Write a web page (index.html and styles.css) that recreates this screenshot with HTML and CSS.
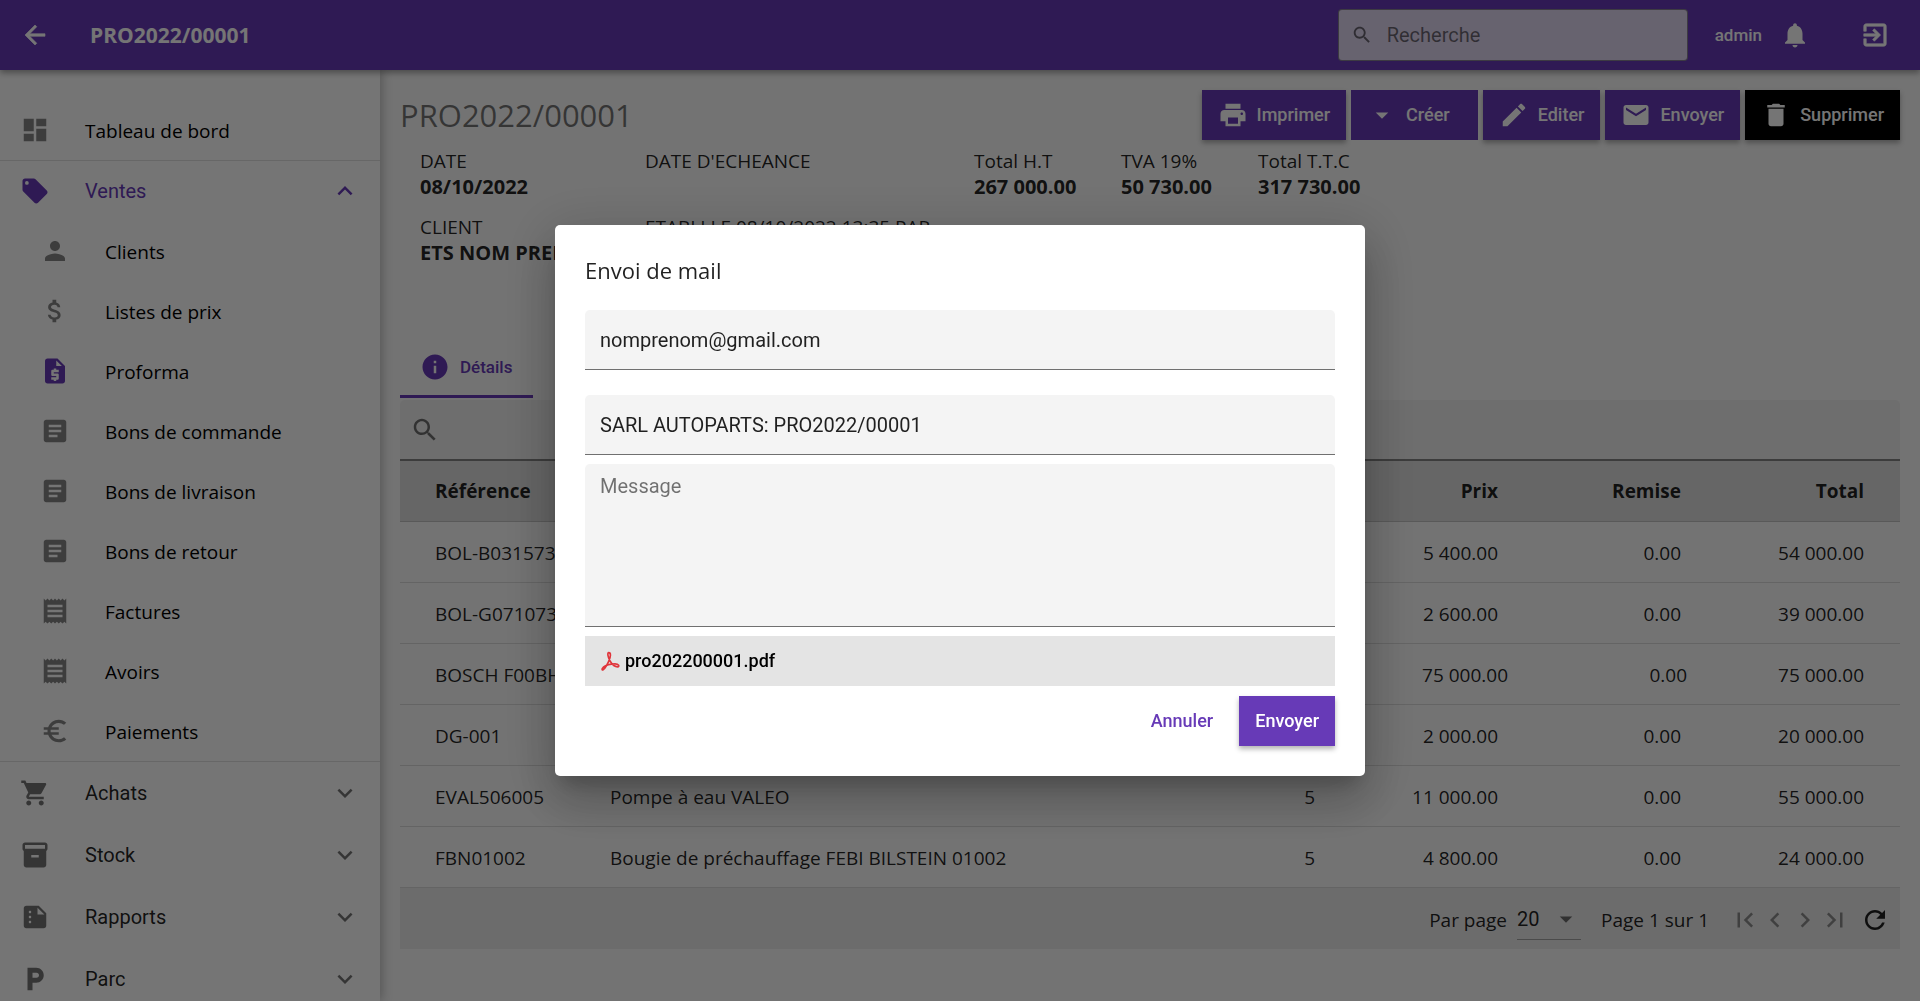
FILE: index.html
```html
<!DOCTYPE html>
<html lang="fr">
<head>
<meta charset="utf-8">
<meta name="viewport" content="width=device-width, initial-scale=1">
<title>PRO2022/00001</title>
<link rel="stylesheet" href="styles.css">
</head>
<body>
<svg class="sprite" aria-hidden="true">
  <symbol id="back" viewBox="0 0 24 24"><path stroke="currentColor" stroke-width=".5" d="M20 11H7.83l5.59-5.59L12 4l-8 8 8 8 1.41-1.41L7.83 13H20v-2z"/></symbol>
  <symbol id="search" viewBox="0 0 24 24"><path d="M15.5 14h-.79l-.28-.27C15.41 12.59 16 11.11 16 9.5 16 5.91 13.09 3 9.5 3S3 5.91 3 9.5 5.91 16 9.5 16c1.61 0 3.09-.59 4.23-1.57l.27.28v.79l5 4.99L20.49 19l-4.99-5zm-6 0C7.01 14 5 11.99 5 9.5S7.01 5 9.5 5 14 7.01 14 9.5 11.99 14 9.5 14z"/></symbol>
  <symbol id="bell" viewBox="0 0 24 24"><path d="M12 22c1.1 0 2-.9 2-2h-4c0 1.1.89 2 2 2zm6-6v-5c0-3.07-1.64-5.64-4.5-6.32V4c0-.83-.67-1.5-1.5-1.5s-1.5.67-1.5 1.5v.68C7.63 5.36 6 7.92 6 11v5l-2 2v1h16v-1l-2-2z"/></symbol>
  <symbol id="exit" viewBox="0 0 24 24"><path stroke="currentColor" stroke-width=".5" d="M10.09 15.59L11.5 17l5-5-5-5-1.41 1.41L12.67 11H3v2h9.67l-2.58 2.59zM19 3H5c-1.11 0-2 .9-2 2v4h2V5h14v14H5v-4H3v4c0 1.1.89 2 2 2h14c1.1 0 2-.9 2-2V5c0-1.1-.9-2-2-2z"/></symbol>
  <symbol id="dashboard" viewBox="0 0 24 24"><path d="M3 13h8V3H3v10zm0 8h8v-6H3v6zm10 0h8V11h-8v10zm0-18v6h8V3h-8z"/></symbol>
  <symbol id="tag" viewBox="0 0 24 24"><path d="M5.5,7A1.5,1.5 0 0,1 4,5.5A1.5,1.5 0 0,1 5.5,4A1.5,1.5 0 0,1 7,5.5A1.5,1.5 0 0,1 5.5,7M21.41,11.58L12.41,2.58C12.05,2.22 11.55,2 11,2H4C2.89,2 2,2.89 2,4V11C2,11.55 2.22,12.05 2.59,12.41L11.58,21.41C11.95,21.77 12.45,22 13,22C13.55,22 14.05,21.77 14.41,21.41L21.41,14.41C21.78,14.05 22,13.55 22,13C22,12.44 21.77,11.94 21.41,11.58Z"/></symbol>
  <symbol id="up" viewBox="0 0 24 24"><path d="M12 8l-6 6 1.41 1.41L12 10.83l4.59 4.58L18 14z"/></symbol>
  <symbol id="down" viewBox="0 0 24 24"><path d="M16.59 8.59L12 13.17 7.41 8.59 6 10l6 6 6-6z"/></symbol>
  <symbol id="person" viewBox="0 0 24 24"><path d="M12 12c2.21 0 4-1.79 4-4s-1.79-4-4-4-4 1.79-4 4 1.79 4 4 4zm0 2c-2.67 0-8 1.34-8 4v2h16v-2c0-2.66-5.33-4-8-4z"/></symbol>
  <symbol id="dollar" viewBox="0 0 24 24"><path d="M11.8 10.9c-2.27-.59-3-1.2-3-2.15 0-1.09 1.01-1.85 2.7-1.85 1.78 0 2.44.85 2.5 2.1h2.21c-.07-1.72-1.12-3.3-3.21-3.81V3h-3v2.16c-1.94.42-3.5 1.68-3.5 3.61 0 2.31 1.91 3.46 4.7 4.13 2.5.6 3 1.48 3 2.41 0 .69-.49 1.79-2.7 1.79-2.06 0-2.87-.92-2.98-2.1h-2.2c.12 2.19 1.76 3.42 3.68 3.83V21h3v-2.15c1.95-.37 3.5-1.5 3.5-3.55 0-2.84-2.43-3.81-4.7-4.4z"/></symbol>
  <symbol id="quote" viewBox="0 0 24 24"><path d="M14 2H6c-1.1 0-1.99.9-1.99 2L4 20c0 1.1.89 2 1.99 2H18c1.1 0 2-.9 2-2V8l-6-6zm1 11h-4v1h3c.55 0 1 .45 1 1v3c0 .55-.45 1-1 1h-1v1h-2v-1H9v-2h4v-1h-3c-.55 0-1-.45-1-1v-3c0-.55.45-1 1-1h1v-1h2v1h2v2zm-2-5V3.5L17.5 8H13z"/></symbol>
  <symbol id="article" viewBox="0 0 24 24"><path d="M19 3H5c-1.1 0-2 .9-2 2v14c0 1.1.9 2 2 2h14c1.1 0 2-.9 2-2V5c0-1.1-.9-2-2-2zm-5 14H7v-2h7v2zm3-4H7v-2h10v2zm0-4H7V7h10v2z"/></symbol>
  <symbol id="receipt" viewBox="0 0 24 24"><path d="M18 17H6v-2h12v2zm0-4H6v-2h12v2zm0-4H6V7h12v2zM3 22l1.5-1.5L6 22l1.5-1.5L9 22l1.5-1.5L12 22l1.5-1.5L15 22l1.5-1.5L18 22l1.5-1.5L21 22V2l-1.5 1.5L18 2l-1.500 1.500L15 2l-1.500 1.500L12 2l-1.500 1.500L9 2 7.500 3.500 6 2 4.500 3.500 3 2v20z"/></symbol>
  <symbol id="euro" viewBox="0 0 24 24"><path d="M15 18.500c-2.510 0-4.680-1.420-5.760-3.500H15v-2H8.580c-.05-.33-.08-.66-.08-1s.03-.67.08-1H15V9H9.240C10.320 6.920 12.500 5.500 15 5.500c1.610 0 3.090.59 4.230 1.570L21 5.300C19.410 3.870 17.300 3 15 3c-3.920 0-7.240 2.510-8.480 6H3v2h3.060c-.04.33-.06.66-.06 1s.02.67.06 1H3v2h3.520c1.240 3.490 4.560 6 8.480 6 2.310 0 4.410-.87 6-2.300l-1.780-1.770c-1.130.98-2.600 1.570-4.220 1.570z"/></symbol>
  <symbol id="cart" viewBox="0 0 24 24"><path d="M7 18c-1.1 0-1.99.9-1.99 2S5.9 22 7 22s2-.9 2-2-.9-2-2-2zM1 2v2h2l3.6 7.59-1.35 2.45c-.16.28-.25.61-.25.96 0 1.1.9 2 2 2h12v-2H7.42c-.14 0-.25-.11-.25-.25l.03-.12.9-1.63h7.45c.75 0 1.41-.41 1.75-1.03l3.58-6.49c.08-.14.12-.31.12-.48 0-.55-.45-1-1-1H5.21l-.94-2H1zm16 16c-1.1 0-1.99.9-1.99 2s.89 2 1.99 2 2-.9 2-2-.9-2-2-2z"/></symbol>
  <symbol id="box" viewBox="0 0 24 24"><path d="M20 2H4c-1 0-2 .9-2 2v3.01c0 .72.43 1.34 1 1.69V20c0 1.1 1.1 2 2 2h14c.9 0 2-.9 2-2V8.7c.57-.35 1-.97 1-1.69V4c0-1.1-1-2-2-2zm-5 12H9v-2h6v2zm5-7H4V4l16-.02V7z"/></symbol>
  <symbol id="report" viewBox="0 0 24 24"><path d="M15 3H5c-1.1 0-1.99.9-1.99 2L3 19c0 1.1.89 2 1.99 2H19c1.1 0 2-.9 2-2V9l-6-6zM8 17c-.55 0-1-.45-1-1s.45-1 1-1 1 .45 1 1-.45 1-1 1zm0-4c-.55 0-1-.45-1-1s.45-1 1-1 1 .45 1 1-.45 1-1 1zm0-4c-.55 0-1-.45-1-1s.45-1 1-1 1 .45 1 1-.45 1-1 1zm6 1V4.5l5.5 5.5H14z"/></symbol>
  <symbol id="parking" viewBox="0 0 24 24"><path d="M13 3H6v18h4v-6h3c3.31 0 6-2.69 6-6s-2.69-6-6-6zm.2 8H10V7h3.2c1.1 0 2 .9 2 2s-.9 2-2 2z"/></symbol>
  <symbol id="print" viewBox="0 0 24 24"><path d="M19 8H5c-1.66 0-3 1.34-3 3v6h4v4h12v-4h4v-6c0-1.66-1.34-3-3-3zm-3 11H8v-5h8v5zm3-7c-.55 0-1-.45-1-1s.45-1 1-1 1 .45 1 1-.45 1-1 1zm-1-9H6v4h12V3z"/></symbol>
  <symbol id="drop" viewBox="0 0 24 24"><path d="M7 10l5 5 5-5z"/></symbol>
  <symbol id="edit" viewBox="0 0 24 24"><path d="M3 17.25V21h3.75L17.81 9.94l-3.75-3.75L3 17.25zM20.71 7.04c.39-.39.39-1.02 0-1.41l-2.34-2.34c-.39-.39-1.02-.39-1.41 0l-1.83 1.83 3.75 3.75 1.83-1.83z"/></symbol>
  <symbol id="mail" viewBox="0 0 24 24"><path d="M20 4H4c-1.1 0-1.99.9-1.99 2L2 18c0 1.1.9 2 2 2h16c1.1 0 2-.9 2-2V6c0-1.1-.9-2-2-2zm0 4l-8 5-8-5V6l8 5 8-5v2z"/></symbol>
  <symbol id="trash" viewBox="0 0 24 24"><path d="M6 19c0 1.1.9 2 2 2h8c1.1 0 2-.9 2-2V7H6v12zM19 4h-3.5l-1-1h-5l-1 1H5v2h14V4z"/></symbol>
  <symbol id="info" viewBox="0 0 24 24"><path d="M12 2C6.48 2 2 6.48 2 12s4.48 10 10 10 10-4.48 10-10S17.52 2 12 2zm1 15h-2v-6h2v6zm0-8h-2V7h2v2z"/></symbol>
  <symbol id="first" viewBox="0 0 24 24"><path d="M18.41 16.59L13.82 12l4.59-4.59L17 6l-6 6 6 6zM6 6h2v12H6z"/></symbol>
  <symbol id="prev" viewBox="0 0 24 24"><path d="M15.41 7.41L14 6l-6 6 6 6 1.41-1.41L10.83 12z"/></symbol>
  <symbol id="next" viewBox="0 0 24 24"><path d="M10 6L8.59 7.41 13.17 12l-4.58 4.59L10 18l6-6z"/></symbol>
  <symbol id="last" viewBox="0 0 24 24"><path d="M5.59 7.41L10.18 12l-4.59 4.59L7 18l6-6-6-6zM16 6h2v12h-2z"/></symbol>
  <symbol id="refresh" viewBox="0 0 24 24"><path d="M17.65 6.35C16.2 4.9 14.21 4 12 4c-4.42 0-7.99 3.58-7.99 8s3.57 8 7.99 8c3.73 0 6.84-2.55 7.73-6h-2.08c-.82 2.33-3.04 4-5.65 4-3.31 0-6-2.69-6-6s2.69-6 6-6c1.66 0 3.14.69 4.22 1.78L13 11h7V4l-2.35 2.35z"/></symbol>
  <symbol id="pdf" viewBox="0 0 24 24"><path fill="none" stroke="currentColor" stroke-width="2" stroke-linejoin="round" d="M10.500 2C8.500 2 9.500 7 12 12C14.500 16 18 19 21 19C24 18.500 22.500 15.500 18 15.500C12 15.500 7 17 4 19.500C1 22.500 3 24 5.500 21C8.500 17 12.500 9 12.500 5C12.500 3 11.800 2 10.500 2Z"/></symbol>
</svg>

<header class="topbar">
  <button class="icon-btn" aria-label="Retour"><svg class="icon"><use href="#back"/></svg></button>
  <span class="topbar-title">PRO2022/00001</span>
  <label class="top-search"><svg class="icon icon-s"><use href="#search"/></svg><input type="search" placeholder="Recherche" aria-label="Recherche"></label>
  <span class="user">admin</span>
  <button class="icon-btn bell" aria-label="Notifications"><svg class="icon"><use href="#bell"/></svg></button>
  <button class="icon-btn" aria-label="Déconnexion"><svg class="icon"><use href="#exit"/></svg></button>
</header>

<div class="shell">
  <nav class="sidebar">
    <a class="item" href="#"><svg class="icon"><use href="#dashboard"/></svg><span>Tableau de bord</span></a>
    <div class="group">
      <a class="item head active" href="#"><svg class="icon"><use href="#tag"/></svg><span>Ventes</span><svg class="icon"><use href="#up"/></svg></a>
      <a class="item sub" href="#"><svg class="icon"><use href="#person"/></svg><span>Clients</span></a>
      <a class="item sub" href="#"><svg class="icon"><use href="#dollar"/></svg><span>Listes de prix</span></a>
      <a class="item sub current" href="#"><svg class="icon"><use href="#quote"/></svg><span>Proforma</span></a>
      <a class="item sub" href="#"><svg class="icon"><use href="#article"/></svg><span>Bons de commande</span></a>
      <a class="item sub" href="#"><svg class="icon"><use href="#article"/></svg><span>Bons de livraison</span></a>
      <a class="item sub" href="#"><svg class="icon"><use href="#article"/></svg><span>Bons de retour</span></a>
      <a class="item sub" href="#"><svg class="icon"><use href="#receipt"/></svg><span>Factures</span></a>
      <a class="item sub" href="#"><svg class="icon"><use href="#receipt"/></svg><span>Avoirs</span></a>
      <a class="item sub" href="#"><svg class="icon"><use href="#euro"/></svg><span>Paiements</span></a>
    </div>
    <a class="item head closed" href="#"><svg class="icon"><use href="#cart"/></svg><span>Achats</span><svg class="icon"><use href="#down"/></svg></a>
    <a class="item head closed" href="#"><svg class="icon"><use href="#box"/></svg><span>Stock</span><svg class="icon"><use href="#down"/></svg></a>
    <a class="item head closed" href="#"><svg class="icon"><use href="#report"/></svg><span>Rapports</span><svg class="icon"><use href="#down"/></svg></a>
    <a class="item head closed" href="#"><svg class="icon"><use href="#parking"/></svg><span>Parc</span><svg class="icon"><use href="#down"/></svg></a>
  </nav>

  <main class="content">
    <div class="heading">
      <h1>PRO2022/00001</h1>
      <div class="actions">
        <button class="btn"><svg class="icon"><use href="#print"/></svg>Imprimer</button>
        <button class="btn menu"><svg class="icon"><use href="#drop"/></svg>Créer</button>
        <button class="btn"><svg class="icon"><use href="#edit"/></svg>Editer</button>
        <button class="btn"><svg class="icon"><use href="#mail"/></svg>Envoyer</button>
        <button class="btn danger"><svg class="icon"><use href="#trash"/></svg>Supprimer</button>
      </div>
    </div>

    <dl class="facts">
      <div><dt>DATE</dt><dd>08/10/2022</dd></div>
      <div><dt>DATE D'ECHEANCE</dt></div>
      <div><dt>Total H.T</dt><dd>267 000.00</dd></div>
      <div><dt>TVA 19%</dt><dd>50 730.00</dd></div>
      <div><dt>Total T.T.C</dt><dd>317 730.00</dd></div>
      <div><dt>CLIENT</dt><dd>ETS NOM PRENOM</dd></div>
      <div class="author"><dt>ETABLI LE 08/10/2022 13:35 PAR</dt><dd>admin</dd></div>
    </dl>

    <div class="tabs" role="tablist">
      <button class="tab" role="tab" aria-selected="true"><svg class="icon"><use href="#info"/></svg>Détails</button>
    </div>

    <label class="filter"><svg class="icon"><use href="#search"/></svg><input type="text" aria-label="Filtrer les lignes"></label>

    <table class="lines">
      <colgroup><col class="c-ref"><col><col class="c-num"><col class="c-num"><col class="c-num"><col class="c-num"></colgroup>
      <thead><tr><th>Référence</th><th>Désignation</th><th class="num">Qté</th><th class="num">Prix</th><th class="num">Remise</th><th class="num">Total</th></tr></thead>
      <tbody>
        <tr><td>BOL-B031573</td><td>Filtre à huile</td><td class="num">10</td><td class="num">5 400.00</td><td class="num">0.00</td><td class="num">54 000.00</td></tr>
        <tr><td>BOL-G071073</td><td>Filtre à air</td><td class="num">15</td><td class="num">2 600.00</td><td class="num">0.00</td><td class="num">39 000.00</td></tr>
        <tr class="wide"><td>BOSCH F00BH</td><td>Pompe BOSCH</td><td class="num">1</td><td class="num">75 000.00</td><td class="num">0.00</td><td class="num">75 000.00</td></tr>
        <tr><td>DG-001</td><td>Disque</td><td class="num">10</td><td class="num">2 000.00</td><td class="num">0.00</td><td class="num">20 000.00</td></tr>
        <tr><td>EVAL506005</td><td>Pompe à eau VALEO</td><td class="num">5</td><td class="num">11 000.00</td><td class="num">0.00</td><td class="num">55 000.00</td></tr>
        <tr><td>FBN01002</td><td>Bougie de préchauffage FEBI BILSTEIN 01002</td><td class="num">5</td><td class="num">4 800.00</td><td class="num">0.00</td><td class="num">24 000.00</td></tr>
      </tbody>
    </table>

    <div class="pager">
      <label for="per-page">Par page</label>
      <span class="select"><select id="per-page"><option>20</option></select><svg class="icon"><use href="#drop"/></svg></span>
      <span class="page-info">Page 1 sur 1</span>
      <div class="page-btns">
        <button class="icon-btn" aria-label="Première page" disabled><svg class="icon"><use href="#first"/></svg></button>
        <button class="icon-btn" aria-label="Page précédente" disabled><svg class="icon"><use href="#prev"/></svg></button>
        <button class="icon-btn" aria-label="Page suivante" disabled><svg class="icon"><use href="#next"/></svg></button>
        <button class="icon-btn" aria-label="Dernière page" disabled><svg class="icon"><use href="#last"/></svg></button>
      </div>
      <button class="icon-btn" aria-label="Actualiser"><svg class="icon"><use href="#refresh"/></svg></button>
    </div>
  </main>
</div>

<div class="scrim">
  <form class="dialog" role="dialog" aria-modal="true" aria-labelledby="dialog-title">
    <h2 id="dialog-title">Envoi de mail</h2>
    <input class="field" type="email" value="nomprenom@gmail.com" aria-label="Destinataire">
    <input class="field subject" type="text" value="SARL AUTOPARTS: PRO2022/00001" aria-label="Objet">
    <textarea class="field message" placeholder="Message" aria-label="Message"></textarea>
    <a class="attachment" href="#"><svg class="icon icon-s"><use href="#pdf"/></svg>pro202200001.pdf</a>
    <div class="dialog-actions">
      <button class="btn flat" type="button">Annuler</button>
      <button class="btn" type="button">Envoyer</button>
    </div>
  </form>
</div>
</body>
</html>
```
FILE: styles.css
```css
:root {
  --primary: #673ab7;
  --text: rgba(0, 0, 0, .87);
  --muted: rgba(0, 0, 0, .54);
  --line: rgba(0, 0, 0, .12);
  --ui: "Open Sans", "Noto Sans", sans-serif;
  --control: Roboto, "Liberation Sans", sans-serif;
}

* { box-sizing: border-box; }

body {
  margin: 0;
  height: 100vh;
  overflow: hidden;
  display: flex;
  flex-direction: column;
  background: #fafafa;
  color: var(--text);
  font: 19px/26px var(--ui);
}

button, input, select, textarea { font: inherit; color: inherit; }
a { color: inherit; text-decoration: none; }

.sprite { display: none; }
.icon { width: 30px; height: 30px; flex: none; fill: currentColor; display: block; }
.icon-s { width: 22px; height: 22px; }
.icon-btn { border: 0; padding: 0; background: none; flex: none; }

/* Top bar */
.topbar {
  flex: none;
  height: 70px;
  display: flex;
  align-items: center;
  padding: 0 30px 0 20px;
  background: var(--primary);
  color: #fff;
  position: relative;
  z-index: 2;
  box-shadow: 0 3px 6px rgba(0, 0, 0, .35);
}
.topbar-title { margin-left: 40px; flex: 1; font-weight: 700; font-size: 21px; }
.top-search {
  width: 350px;
  height: 52px;
  display: flex;
  align-items: center;
  gap: 14px;
  padding: 0 12px;
  border: 1px solid rgba(0, 0, 0, .4);
  border-radius: 4px;
  background: rgba(255, 255, 255, .8);
  color: var(--muted);
}
.top-search input {
  flex: 1;
  min-width: 0;
  border: 0;
  padding: 0;
  background: none;
  font: 20px/26px var(--control);
}
::placeholder { color: var(--muted); opacity: 1; }
.user { margin: 0 18px 0 27px; font: 500 17px/26px var(--control); }
.bell { margin-right: 50px; }

.shell { flex: 1; min-height: 0; display: flex; }

/* Navigation */
.sidebar {
  flex: none;
  width: 380px;
  overflow: hidden;
  padding-top: 30px;
  background: #fff;
  color: #000;
  box-shadow: 2px 0 10px rgba(0, 0, 0, .25);
}
.item { display: flex; align-items: center; gap: 35px; height: 60px; padding: 0 20px; }
.item .icon { color: rgba(0, 0, 0, .48); }
.item span { padding-top: 2px; }
.group { border-top: 1px solid var(--line); border-bottom: 1px solid var(--line); }
.item.sub { padding-left: 40px; }
.head { font: 20px/26px var(--control); color: var(--text); }
.head span { flex: 1; padding-top: 0; }
.closed { height: 62px; }
.closed .icon { color: var(--muted); }
.active, .active .icon, .current .icon { color: var(--primary); }

/* Page content */
.content { flex: 1; min-width: 0; padding: 20px 20px 0; }
.heading { display: flex; align-items: center; justify-content: space-between; height: 50px; }
h1 { margin: 0; font-weight: 400; font-size: 31px; line-height: 40px; color: var(--muted); }
.actions { display: flex; gap: 5px; }
.btn {
  height: 50px;
  display: flex;
  align-items: center;
  gap: 9px;
  padding: 0 16px;
  border: 0;
  background: var(--primary);
  color: #fff;
  font: 500 18px/26px var(--control);
  box-shadow: 0 3px 5px rgba(0, 0, 0, .3);
}
.menu { padding-right: 28px; box-shadow: none; }
.danger { background: #000; }

.facts {
  display: grid;
  grid-template-columns: 225px 329px 147px 137px 1fr;
  grid-auto-rows: 52px;
  row-gap: 14px;
  margin: 0;
  padding: 8px 20px 0;
}
.facts dd { margin: 0; font-weight: 700; font-size: 20px; }
.author { white-space: nowrap; }

.tabs { display: flex; margin-top: 70px; }
.tab {
  height: 62px;
  display: flex;
  align-items: center;
  gap: 10px;
  padding: 2px 21px 0 20px;
  border: 0;
  border-bottom: 3px solid var(--primary);
  background: none;
  color: var(--primary);
  font: 500 17px/26px var(--control);
}

.filter {
  display: flex;
  align-items: center;
  height: 61px;
  margin-top: 2px;
  padding: 0 10px;
  border-bottom: 2px solid rgba(0, 0, 0, .45);
  border-radius: 5px 5px 0 0;
  background: #f0f0f0;
  color: var(--muted);
}
.filter input { flex: 1; border: 0; background: none; }

.lines { width: 100%; border-collapse: separate; border-spacing: 0; table-layout: fixed; }
.c-ref { width: 175px; }
.c-num { width: 183px; }
th, td {
  height: 61px;
  padding: 2px 0 0 35px;
  border-bottom: 1px solid var(--line);
  text-align: left;
  white-space: nowrap;
}
th { padding-top: 0; background: #dfdfdf; }
.lines .num { padding-left: 0; padding-right: 36px; text-align: right; }
.lines .wide .num:nth-child(4) { padding-right: 26px; }
.lines .wide .num:nth-child(5) { padding-right: 30px; }

.pager {
  display: flex;
  align-items: center;
  justify-content: flex-end;
  height: 61px;
  padding: 2px 10px 0;
  background: #ebebeb;
}
.select {
  display: flex;
  align-items: center;
  width: 64px;
  height: 40px;
  margin: 0 20px 0 10px;
  border-bottom: 1px solid rgba(0, 0, 0, .3);
}
.select select { flex: 1; min-width: 0; appearance: none; border: 0; padding: 0; background: none; font: 20px/26px var(--control); }
.select .icon { color: var(--muted); }
.page-btns { display: flex; margin: 0 10px 0 21px; }
.page-btns .icon { color: rgba(0, 0, 0, .4); }

/* Mail dialog */
.scrim {
  position: fixed;
  inset: 0;
  z-index: 10;
  display: flex;
  align-items: center;
  justify-content: center;
  background: rgba(0, 0, 0, .54);
}
.dialog {
  width: 810px;
  max-width: 90%;
  display: flex;
  flex-direction: column;
  padding: 30px;
  border-radius: 5px;
  background: #fff;
  box-shadow: 0 14px 18px -8px rgba(0, 0, 0, .2), 0 28px 46px 4px rgba(0, 0, 0, .14), 0 10px 56px 10px rgba(0, 0, 0, .14);
}
h2 { margin: 0 0 25px; font-weight: 500; font-size: 22px; line-height: 30px; }
.field {
  height: 60px;
  padding: 0 15px;
  border: 0;
  border-bottom: 1px solid rgba(0, 0, 0, .54);
  border-radius: 5px 5px 0 0;
  background: #f4f4f4;
  font: 20px/26px var(--control);
}
.subject { margin-top: 25px; }
.message { height: 163px; margin-top: 9px; padding-top: 9px; resize: none; }
.attachment {
  display: flex;
  align-items: center;
  gap: 5px;
  height: 50px;
  margin-top: 9px;
  padding: 0 15px;
  background: #e4e4e4;
  color: #000;
  font: 500 18px/26px var(--control);
}
.attachment .icon { width: 20px; height: 20px; color: #e0353b; }
.dialog-actions { display: flex; justify-content: flex-end; gap: 10px; margin-top: 10px; }
.flat { background: none; color: var(--primary); box-shadow: none; }
```
